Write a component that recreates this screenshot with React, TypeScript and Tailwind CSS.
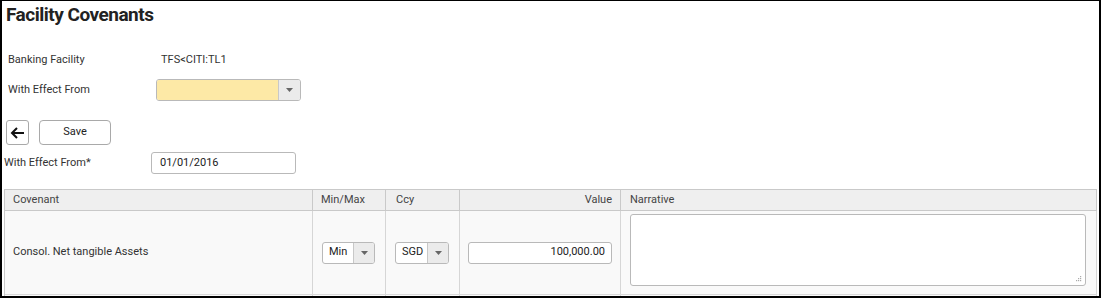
function Caret() {
    return (
        <svg width="7" height="4" viewBox="0 0 7 4">
            <path d="M0 0 L7 0 L3.5 4 Z" fill="#666" />
        </svg>
    );
}

function SmallSelect({ value, width }: { value: string; width: string }) {
    return (
        <div className={`flex h-[22px] ${width} rounded-[3px] border border-[#b9b9b9] bg-white overflow-hidden`}>
            <div className="flex-1 flex items-center pl-[6px] text-[11px] text-[#222]">{value}</div>
            <div className="w-[21px] flex items-center justify-center border-l border-[#c8c8c8] bg-[#ebebeb]">
                <Caret />
            </div>
        </div>
    );
}

export default function App() {
    return (
        <div
            className="w-[1101px] h-[298px] bg-white border-t border-l-2 border-r-2 border-b-2 border-black overflow-hidden relative"
            style={{ fontFamily: "Roboto, 'Liberation Sans', Arial, sans-serif" }}
        >
            <h1 className="ml-[4px] mt-[1px] text-[19px] leading-[26px] font-bold text-[#222] tracking-[-0.5px]">
                Facility Covenants
            </h1>

            <div className="mt-[24px] flex items-center h-[16px] text-[11px] text-[#333]">
                <span className="ml-[6px] w-[153px]">Banking Facility</span>
                <span>TFS&lt;CITI:TL1</span>
            </div>

            <div className="mt-[11px] flex items-center text-[11px] text-[#333]">
                <span className="ml-[6px] w-[148px]">With Effect From</span>
                <div className="flex h-[22px] w-[145px] rounded-[3px] border border-[#b9b9b9] overflow-hidden">
                    <div className="flex-1 bg-[#fde9a6]" />
                    <div className="w-[22px] flex items-center justify-center border-l border-[#c8c8c8] bg-[#ebebeb]">
                        <Caret />
                    </div>
                </div>
            </div>

            <div className="mt-[19px] flex items-center gap-[10px] ml-[4px]">
                <button className="w-[23px] h-[25px] flex items-center justify-center rounded-[3px] border border-[#a9a9a9] bg-white">
                    <svg width="15" height="12" viewBox="0 0 15 12">
                        <path d="M14 6 H2 M7 1 L2 6 L7 11" stroke="#111" strokeWidth="2" fill="none" />
                    </svg>
                </button>
                <button className="w-[72px] h-[25px] rounded-[4px] border border-[#a9a9a9] bg-white text-[11px] text-[#222]">
                    Save
                </button>
            </div>

            <div className="mt-[7px] flex items-center text-[11px] text-[#333]">
                <span className="ml-[2px] w-[147px]">With Effect From*</span>
                <div className="h-[22px] w-[145px] rounded-[3px] border border-[#b9b9b9] bg-white flex items-center pl-[8px] text-[11px] text-[#222]">
                    01/01/2016
                </div>
            </div>

            <div className="mt-[15px] ml-[2px] w-[1093px] border-t border-l border-[#c9c9c9] text-[11px] text-[#444]">
                <div className="flex h-[21px] bg-[#efefef] border-b border-[#c9c9c9]">
                    <div className="w-[308px] border-r border-[#c9c9c9] pl-[8px] flex items-center">Covenant</div>
                    <div className="w-[73px] border-r border-[#c9c9c9] pl-[8px] flex items-center">Min/Max</div>
                    <div className="w-[74px] border-r border-[#c9c9c9] pl-[10px] flex items-center">Ccy</div>
                    <div className="w-[161px] border-r border-[#c9c9c9] pr-[8px] flex items-center justify-end">Value</div>
                    <div className="flex-1 border-r border-[#c9c9c9] pl-[9px] flex items-center">Narrative</div>
                </div>
                <div className="flex h-[84px] bg-[#f9f9f9] border-b border-[#d9d9d9]">
                    <div className="w-[308px] border-r border-[#d6d6d6] pl-[8px] flex items-center text-[#333]">
                        Consol. Net tangible Assets
                    </div>
                    <div className="w-[73px] border-r border-[#d6d6d6] pl-[9px] flex items-center">
                        <SmallSelect value="Min" width="w-[53px]" />
                    </div>
                    <div className="w-[74px] border-r border-[#d6d6d6] pl-[9px] flex items-center">
                        <SmallSelect value="SGD" width="w-[54px]" />
                    </div>
                    <div className="w-[161px] border-r border-[#d6d6d6] pl-[8px] flex items-center">
                        <div className="h-[22px] w-[144px] rounded-[3px] border border-[#b9b9b9] bg-white flex items-center justify-end pr-[6px] text-[#222]">
                            100,000.00
                        </div>
                    </div>
                    <div className="flex-1 border-r border-[#d6d6d6] pl-[9px] pt-[3px]">
                        <div className="relative h-[72px] w-[456px] rounded-[3px] border border-[#b9b9b9] bg-white">
                            <svg className="absolute right-[3px] bottom-[3px]" width="7" height="7" viewBox="0 0 7 7">
                                <rect x="5" y="1" width="1.2" height="1.2" fill="#aaa" />
                                <rect x="3" y="3" width="1.2" height="1.2" fill="#aaa" />
                                <rect x="5" y="3" width="1.2" height="1.2" fill="#aaa" />
                                <rect x="1" y="5" width="1.2" height="1.2" fill="#aaa" />
                                <rect x="3" y="5" width="1.2" height="1.2" fill="#aaa" />
                                <rect x="5" y="5" width="1.2" height="1.2" fill="#aaa" />
                            </svg>
                        </div>
                    </div>
                </div>
                <div className="flex h-[10px] bg-[#f9f9f9]">
                    <div className="w-[308px] border-r border-[#d6d6d6]" />
                    <div className="w-[73px] border-r border-[#d6d6d6]" />
                    <div className="w-[74px] border-r border-[#d6d6d6]" />
                    <div className="w-[161px] border-r border-[#d6d6d6]" />
                    <div className="flex-1 border-r border-[#d6d6d6]" />
                </div>
            </div>
        </div>
    );
}
